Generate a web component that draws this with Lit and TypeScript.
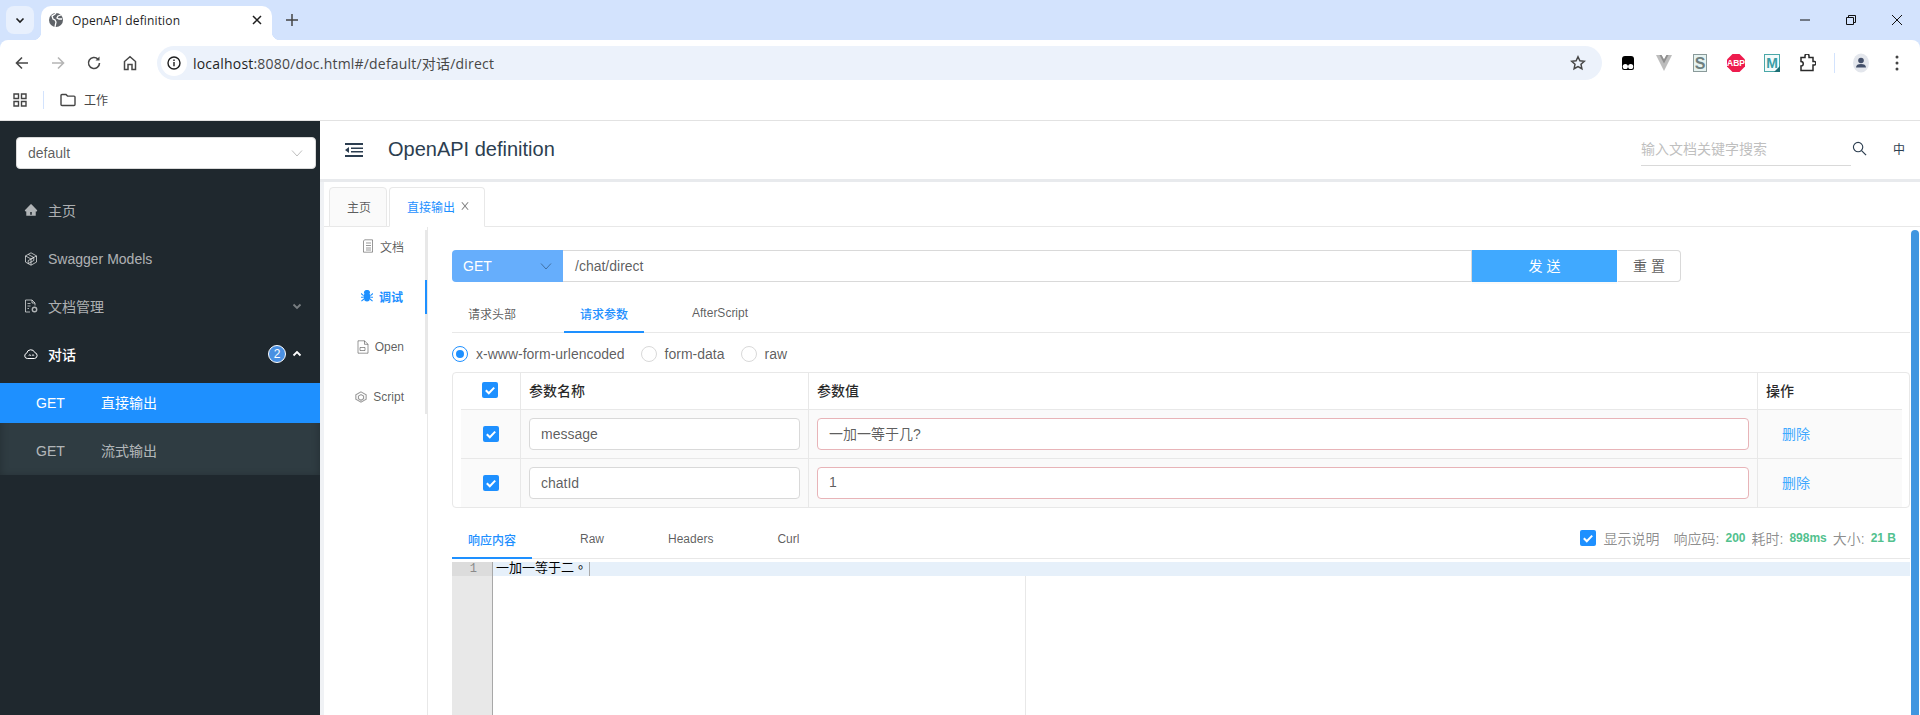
import { LitElement, html, css } from "lit";
import { customElement } from "lit/decorators.js";

const closePath =
  "M563.8 512l262.5-312.9c4.4-5.2.7-13.1-6.1-13.1h-79.8c-4.7 0-9.2 2.1-12.3 5.7L511.6 449.8 295.1 191.7c-3-3.6-7.5-5.7-12.3-5.7H203c-6.8 0-10.5 7.9-6.1 13.1L459.4 512 196.9 824.9A7.95 7.95 0 0 0 203 838h79.8c4.7 0 9.2-2.1 12.3-5.7l216.5-258.1 216.5 258.1c3 3.6 7.5 5.7 12.3 5.7h79.8c6.8 0 10.5-7.9 6.1-13.1L563.8 512z";
const homePath =
  "M946.5 505L560.1 118.8l-25.9-25.9a31.5 31.5 0 0 0-44.4 0L77.5 505a63.9 63.9 0 0 0-18.8 46c.4 35.2 29.7 63.3 64.9 63.3h42.5V940h691.8V614.3h43.4c17.1 0 33.2-6.7 45.3-18.8a63.6 63.6 0 0 0 18.7-45.3c0-17-6.7-33.1-18.8-45.2zM568 868H456V664h112v204z";

const check = html`<span class="cb"><svg viewBox="0 0 16 16" width="16" height="16"><path d="M3.8 8.2l3 3 5.4-5.6" fill="none" stroke="#fff" stroke-width="2"/></svg></span>`;
const chevDown = html`<svg class="ic" viewBox="0 0 12 12" width="12" height="12"><path d="M1 3.5l5 5.5 5-5.5" fill="none" stroke="currentColor" stroke-width="1"/></svg>`;

@customElement("app-root")
export class AppRoot extends LitElement {
  static styles = css`
    :host { display: block; width: 1920px; height: 715px; overflow: hidden; background: #fff;
      font-family: "Liberation Sans", "Noto Sans CJK SC", sans-serif; font-size: 14px; color: rgba(0,0,0,.65); }
    * { box-sizing: border-box; }
    svg { display: block; flex: none; }

    /* browser chrome */
    .browser { background: #d3e3fd; font-family: "Open Sans", "Noto Sans CJK SC", sans-serif; color: #1f1f1f; }
    .strip { height: 40px; display: flex; align-items: flex-start; padding: 6px 0 0 6px; }
    .tabsearch { width: 28px; height: 28px; border-radius: 8px; background: #e8f0fd; display: flex; align-items: center; justify-content: center; }
    .btab { position: relative; margin-left: 7px; width: 231px; height: 34px; background: #fff; border-radius: 10px 10px 0 0; display: flex; align-items: center; padding: 0 9px 6px 7px; font-size: 12px; }
    .btab::before, .btab::after { content: ""; position: absolute; bottom: 0; width: 8px; height: 8px; }
    .btab::before { left: -8px; background: radial-gradient(circle at 0 0, transparent 8px, #fff 8.5px); }
    .btab::after { right: -8px; background: radial-gradient(circle at 100% 0, transparent 8px, #fff 8.5px); }
    .btab .title { margin-left: 8px; flex: 1; letter-spacing: .15px; }
    .newtab { margin: 7px 0 0 13px; }
    .winctl { margin-left: auto; display: flex; padding-top: 9px; padding-right: 18px; gap: 36px; }
    .toolbar { height: 40px; background: #fff; border-radius: 8px 8px 0 0; display: flex; align-items: flex-start; padding: 6px 0 0 13px; }
    .tbtn { width: 18px; height: 34px; margin-right: 18px; display: flex; align-items: center; justify-content: center; color: #474747; }
    .tbtn.dis { color: #b5b5b5; }
    .addr { width: 1445px; height: 34px; border-radius: 17px; background: #ecf2fb; display: flex; align-items: center; padding: 0 16px 0 4px; font-size: 14px; color: #1f1f1f; }
    .info { width: 26px; height: 26px; border-radius: 50%; background: #fff; display: flex; align-items: center; justify-content: center; margin-right: 6px; }
    .url { letter-spacing: .2px; }
    .url span { color: #474747; }
    .star { margin-left: auto; }
    .exts { display: flex; margin-left: 8px; height: 34px; align-items: center; }
    .ext { width: 36px; display: flex; justify-content: center; }
    .sep { width: 1px; height: 20px; background: #d3e3fd; margin: 0 8px 0 8px; }
    .bm { height: 41px; background: #fff; border-bottom: 1px solid #e2e2e2; display: flex; align-items: center; padding: 0 0 1px 13px; font-size: 12px; color: #474747; }
    .bm .bsep { width: 1px; height: 18px; background: #d3e3fd; margin: 0 16px 0 16px; }
    .bm .bname { margin-left: 8px; }

    /* app */
    .app { display: flex; height: 594px; }
    .side { width: 320px; flex: none; background: #1f282e; padding-top: 16px; color: rgba(255,255,255,.65); }
    .sel { margin-left: 16px; width: 300px; height: 32px; background: #fff; border-radius: 4px; border: 1px solid #d9d9d9; display: flex; align-items: center; justify-content: space-between; padding: 0 12px 0 11px; color: rgba(0,0,0,.65); }
    .sel svg { color: #bfbfbf; }
    .menu { margin-top: 18px; }
    .mi { height: 48px; display: flex; align-items: center; padding-left: 24px; }
    .mi.up { padding-bottom: 2px; }
    .mi svg.mic { width: 14px; height: 14px; margin-right: 10px; }
    .mi .arrow { margin-left: auto; margin-right: 17px; color: rgba(255,255,255,.4); }
    .mi.open { color: #fff; font-weight: 500; }
    .badge { margin-left: auto; width: 18px; height: 18px; border-radius: 50%; border: 1px solid #fff; background: #4a90e2; color: #fff; font-size: 12px; font-weight: 400; display: flex; align-items: center; justify-content: center; }
    .mi.open .arrow { margin-left: 5px; color: #fff; }
    .sub { margin-top: 4px; background: #2f3c42; padding-bottom: 4px; box-shadow: inset 0 2px 8px rgba(0,0,0,.25); }
    .si { height: 40px; display: flex; align-items: center; padding-left: 36px; }
    .si .m { width: 65px; }
    .si .n { padding-bottom: 2px; }
    .si.on { background: #1e90ff; color: #fff; margin-bottom: 8px; }

    .main { flex: 1; min-width: 0; background: #f0f2f5; display: flex; flex-direction: column; }
    .head { height: 58px; background: #fff; display: flex; align-items: center; padding-left: 25px; color: #2c3e50; flex: none; }
    .head .title { margin: 0 0 2px 25px; font-size: 20px; }
    .srch { margin-left: auto; width: 210px; height: 32px; padding-bottom: 3px; border-bottom: 1px solid #d9d9d9; color: #bfbfbf; display: flex; align-items: center; }
    .head .sic { margin: -4px 0 0 1px; }
    .zh { margin-left: 26px; margin-right: 15px; margin-top: -4px; font-size: 12px; }
    .band { height: 3px; background: #e8eaed; flex: none; }

    .content { flex: 1; min-height: 0; margin-left: 4px; background: #fff; display: flex; flex-direction: column; }
    .ptabs { flex: none; height: 45px; padding: 5px 0 0 5px; display: flex; gap: 2px; border-bottom: 1px solid #e8e8e8; font-size: 12px; }
    .pt { height: 40px; padding: 0 15px 2px 17px; display: flex; align-items: center; border: 1px solid #e8e8e8; border-radius: 4px 4px 0 0; background: #fafafa; }
    .pt.on { background: #fff; color: #1e90ff; border-bottom-color: #fff; gap: 4px; padding-right: 13px; }
    .pt.on svg { color: rgba(0,0,0,.5); }

    .body { flex: 1; min-height: 0; display: flex; }
    .rail { width: 104px; flex: none; border-right: 1px solid #e8e8e8; font-size: 12px; }
    .railin { margin-top: 3px; width: 103px; height: 184px; border-right: 2px solid #e8e8e8; }
    .ri { width: 103px; height: 34px; margin-bottom: 16px; padding-right: 23px; display: flex; align-items: center; justify-content: flex-end; gap: 6px; }
    .ri.up { padding-bottom: 2px; }
    .ri svg { color: rgba(0,0,0,.4); }
    .ri.on { color: #1e90ff; font-weight: 700; border-right: 2px solid #1e90ff; padding-right: 22px; }
    .ri.on svg { color: #1e90ff; }

    .pane { flex: 1; min-width: 0; display: flex; }
    .scroll { flex: 1; min-width: 0; padding: 23px 0 0 24px; display: flex; flex-direction: column; }
    .bar { width: 8px; margin: 3px 1px 0 1px; background: #4096e0; border-radius: 4px 4px 0 0; flex: none; }

    .urlrow { display: flex; height: 32px; flex: none; }
    .meth { width: 111px; background: #66aefc; color: #fff; border-radius: 4px 0 0 4px; display: flex; align-items: center; justify-content: space-between; padding: 0 11px; }
    .meth svg { color: rgba(0,0,0,.35); }
    .urli { width: 909px; border: 1px solid #d9d9d9; border-left: none; display: flex; align-items: center; padding-left: 12px; }
    .send { width: 145px; background: #40a9ff; color: #fff; display: flex; align-items: center; justify-content: center; padding-bottom: 2px; box-shadow: 0 2px 0 rgba(0,0,0,.02); }
    .rst { width: 64px; border: 1px solid #d9d9d9; border-left-color: #fff; border-radius: 0 4px 4px 0; display: flex; align-items: center; justify-content: center; padding-bottom: 2px; }

    .tabs { flex: none; height: 38px; display: flex; align-items: flex-start; border-bottom: 1px solid #e8e8e8; font-size: 12px; }
    .t1 { margin-top: 13px; }
    .t { height: 38px; padding: 0 16px 2px; margin-right: 32px; display: flex; align-items: center; }
    .t.on { color: #1e90ff; font-weight: 500; border-bottom: 2px solid #1e90ff; padding-bottom: 0; }

    .radios { margin-top: 13px; height: 16px; flex: none; display: flex; gap: 16px; }
    .r { display: flex; align-items: center; gap: 8px; }
    .rd { width: 16px; height: 16px; border-radius: 50%; border: 1px solid #d9d9d9; }
    .rd.on { border-color: #1e90ff; display: flex; align-items: center; justify-content: center; }
    .rd.on::after { content: ""; width: 8px; height: 8px; border-radius: 50%; background: #1e90ff; }

    .tbl { margin-top: 10px; flex: none; height: 136px; border: 1px solid #e8e8e8; border-radius: 4px; }
    .hr { height: 36px; display: grid; grid-template-columns: 68px 288px 949px 1fr; font-weight: 500; color: rgba(0,0,0,.85); }
    .hr > div { display: flex; align-items: center; padding: 0 0 2px 8px; }
    .hr > div:not(:last-child), .br > div:not(:last-child) { border-right: 1px solid #e8e8e8; }
    .hr > div:first-child { justify-content: center; padding-left: 6px; }
    .br { margin: 0 7px 0 8px; height: 49px; background: #fafafa; border-top: 1px solid #e8e8e8; display: grid; grid-template-columns: 60px 288px 949px 1fr; }
    .br > div { display: flex; align-items: center; padding: 0 8px; }
    .br > div:first-child { justify-content: center; padding: 0; }
    .cb { width: 16px; height: 16px; background: #1e90ff; border-radius: 2px; display: block; flex: none; }
    .inp { width: 100%; height: 32px; background: #fff; border: 1px solid #d9d9d9; border-radius: 4px; display: flex; align-items: center; padding-left: 11px; }
    .inp.err { border-color: #e8b4b8; padding-bottom: 2px; }
    .br > div:last-child { padding: 0 0 2px 24px; color: #40a9ff; }

    .t2 { margin-top: 13px; }
    .opts { margin-left: auto; height: 36px; padding: 0 14px 2px 0; display: flex; align-items: center; font-size: 14px; color: rgba(0,0,0,.45); }
    .opts b { color: #52c18e; font-size: 12px; font-weight: 700; margin: 0 6px; }
    .opts .d { margin: 0 14px 0 8px; }
    .opts b:last-child { margin-right: 0; }

    .editor { margin-top: 3px; flex: 1; min-height: 0; display: flex; }
    .gut { width: 41px; flex: none; background: #e8e8e8; border-right: 1px solid #a8a8a8; font-family: "Liberation Mono", monospace; font-size: 12px; color: #8a8a8a; }
    .gl { height: 14px; background: #dcdcdc; line-height: 14px; padding-right: 15px; text-align: right; }
    .ed { flex: 1; min-width: 0; display: flex; flex-direction: column; }
    .al { height: 14px; flex: none; background: #e6f0fa; display: flex; align-items: center; padding-left: 3px; font-family: "Liberation Mono", "Noto Sans CJK TC", monospace; font-size: 13px; line-height: 14px; color: #000; }
    .caret { width: 1px; height: 14px; background: #aaa; margin-left: 2px; }
    .pm { width: 533px; flex: 1; border-right: 1px solid #e8e8e8; }
  `;

  render() {
    return html`
      <div class="browser">
        <div class="strip">
          <div class="tabsearch"><svg viewBox="0 0 12 12" width="12" height="12"><path d="M2.5 4.5L6 8l3.5-3.5" fill="none" stroke="#1f1f1f" stroke-width="1.6"/></svg></div>
          <div class="btab">
            <svg viewBox="0 0 16 16" width="16" height="16"><circle cx="8" cy="8" r="7" fill="#5f6368"/><path d="M8 1c-1 2-3 2-4 3l1 3 2 1 1 2-1 4.800M13 3l-3 1-1 2 2 1 3 0" fill="none" stroke="#fff" stroke-width="1.300"/></svg>
            <span class="title">OpenAPI definition</span>
            <svg viewBox="0 0 12 12" width="12" height="12"><path d="M2 2l8 8M10 2l-8 8" stroke="#1f1f1f" stroke-width="1.500"/></svg>
          </div>
          <svg class="newtab" viewBox="0 0 14 14" width="14" height="14"><path d="M7 1v12M1 7h12" stroke="#444" stroke-width="1.500"/></svg>
          <div class="winctl">
            <svg viewBox="0 0 10 10" width="10" height="10"><path d="M0 5h10" stroke="#111" stroke-width="1"/></svg>
            <svg viewBox="0 0 10 10" width="10" height="10"><path d="M.5 2.500h7v7h-7zM2.500 2.500v-2h7v7h-2" fill="none" stroke="#111" stroke-width="1"/></svg>
            <svg viewBox="0 0 10 10" width="10" height="10"><path d="M0 0l10 10M10 0L0 10" stroke="#111" stroke-width="1"/></svg>
          </div>
        </div>
        <div class="toolbar">
          <div class="tbtn"><svg viewBox="0 0 16 16" width="16" height="16"><path d="M14 8H2.500M8 2.500L2.500 8 8 13.500" fill="none" stroke="currentColor" stroke-width="1.600"/></svg></div>
          <div class="tbtn dis"><svg viewBox="0 0 16 16" width="16" height="16"><path d="M2 8h11.500M8 2.500L13.500 8 8 13.500" fill="none" stroke="currentColor" stroke-width="1.600"/></svg></div>
          <div class="tbtn"><svg viewBox="0 0 16 16" width="16" height="16"><path d="M13.500 8a5.500 5.500 0 1 1-1.600-3.900" fill="none" stroke="currentColor" stroke-width="1.600"/><path d="M13.500 1.500v4h-4z" fill="currentColor"/></svg></div>
          <div class="tbtn"><svg viewBox="0 0 16 16" width="16" height="16"><path d="M2.500 14.500V6.500L8 1.800l5.500 4.700v8H10V9.500H6v5z" fill="none" stroke="currentColor" stroke-width="1.500"/></svg></div>
          <div class="addr">
            <div class="info"><svg viewBox="0 0 14 14" width="14" height="14"><circle cx="7" cy="7" r="6" fill="none" stroke="#1f1f1f" stroke-width="1.400"/><path d="M7 6v4.200M7 3.500v1.500" stroke="#1f1f1f" stroke-width="1.400"/></svg></div>
            <div class="url">localhost<span>:8080/doc.html#/default/对话/direct</span></div>
            <svg class="star" viewBox="0 0 16 16" width="16" height="16"><path d="M8 1.800l1.900 4 4.400.5-3.300 3 .9 4.400L8 11.500l-3.900 2.200.9-4.400-3.300-3 4.400-.5z" fill="none" stroke="#474747" stroke-width="1.500"/></svg>
          </div>
          <div class="exts">
            <div class="ext"><svg viewBox="0 0 16 16" width="16" height="16"><path d="M2 4a3 3 0 0 1 3-3h6a3 3 0 0 1 3 3v9a2 2 0 0 1-2 2H4a2 2 0 0 1-2-2z" fill="#000"/><circle cx="5.300" cy="11.500" r="2.600" fill="#fff"/><circle cx="10.700" cy="11.500" r="2.600" fill="#fff"/></svg></div>
            <div class="ext"><svg viewBox="0 0 18 16" width="18" height="16"><path d="M1 0h5.500L9 4.500 11.500 0H17L9 16z" fill="#bdbdbd"/><path d="M4.500 0h2L9 4.500 11.500 0h2L9 8.500z" fill="#8f8f8f"/></svg></div>
            <div class="ext"><svg viewBox="0 0 16 18" width="16" height="18"><rect x=".5" y=".5" width="13" height="17" transform="translate(1 0)" fill="#e6f3f1" stroke="#8a9a9a"/><text x="8" y="14.500" text-anchor="middle" font-family="Liberation Sans" font-weight="700" font-size="16" fill="#6f8080">S</text></svg></div>
            <div class="ext"><svg viewBox="0 0 18 18" width="18" height="18"><path d="M5.500 0h7L18 5.500v7L12.500 18h-7L0 12.500v-7z" fill="#ee1c4e"/><text x="9" y="12" text-anchor="middle" font-family="Liberation Sans" font-weight="700" font-size="8.500" fill="#fff">ABP</text></svg></div>
            <div class="ext"><svg viewBox="0 0 16 18" width="16" height="18"><rect x=".5" y=".5" width="15" height="17" fill="#f4fbfb" stroke="#4aa8a8"/><text x="8" y="14" text-anchor="middle" font-family="Liberation Sans" font-weight="700" font-size="14" fill="#3a9ea6">M</text><path d="M10 18l6-6v6z" fill="#1d6f75"/></svg></div>
            <div class="ext"><svg viewBox="0 0 16 18" width="16" height="18"><path d="M1 3.500h4V2a2 2 0 0 1 4 0v1.500h4v4h1.500a1.800 1.800 0 0 1 0 3.500H13v5.500H1v-4.500a2.200 2.200 0 0 0 0-4.500z" fill="none" stroke="#2a2a2a" stroke-width="1.500"/></svg></div>
            <div class="sep"></div>
            <div class="ext"><svg viewBox="0 0 16 20" width="16" height="20"><ellipse cx="8" cy="10" rx="8" ry="9.500" fill="#e3e6ec"/><circle cx="8" cy="7.500" r="2.800" fill="#44506a"/><path d="M3 14.500c0-2.500 2-3.500 5-3.500s5 1 5 3.500z" fill="#44506a"/></svg></div>
            <div class="ext"><svg viewBox="0 0 4 16" width="4" height="16"><circle cx="2" cy="2" r="1.500" fill="#444"/><circle cx="2" cy="8" r="1.500" fill="#444"/><circle cx="2" cy="14" r="1.500" fill="#444"/></svg></div>
          </div>
        </div>
        <div class="bm">
          <svg viewBox="0 0 14 14" width="14" height="14"><path d="M1 1h4.500v4.500H1zM8.500 1H13v4.500H8.500zM1 8.500h4.500V13H1zM8.500 8.500H13V13H8.500z" fill="none" stroke="#444" stroke-width="1.400"/></svg>
          <div class="bsep"></div>
          <svg viewBox="0 0 16 14" width="16" height="14"><path d="M1 2.500a1 1 0 0 1 1-1h4l1.500 1.600H14a1 1 0 0 1 1 1v7.400a1 1 0 0 1-1 1H2a1 1 0 0 1-1-1z" fill="none" stroke="#444" stroke-width="1.400"/></svg>
          <span class="bname">工作</span>
        </div>
      </div>

      <div class="app">
        <aside class="side">
          <div class="sel"><span>default</span>${chevDown}</div>
          <div class="menu">
            <div class="mi up"><svg class="mic" viewBox="0 0 1024 1024"><path d="${homePath}" fill="currentColor"/></svg>主页</div>
            <div class="mi"><svg class="mic" viewBox="0 0 14 14"><path d="M7 .8l5.500 3.100v6.200L7 13.200 1.500 10.100V3.900zM1.500 3.900L7 7l5.500-3.100M7 7v6.200M4.200 2.400L9.800 5.500v3l-5.600 3.100v-3L9.800 5.500" fill="none" stroke="currentColor" stroke-width="1"/></svg>Swagger Models</div>
            <div class="mi up"><svg class="mic" viewBox="0 0 14 14"><path d="M6 13H1.500V1h6.500l3 3v2.500M3.500 4.500h3M3.500 7h3M3.500 9.500h1.500M8 1v3h3" fill="none" stroke="currentColor" stroke-width="1"/><circle cx="10.500" cy="10.500" r="2.200" fill="none" stroke="currentColor" stroke-width="1.400"/></svg>文档管理<svg class="arrow" viewBox="0 0 12 12" width="12" height="12"><path d="M2.500 4.500L6 8l3.500-3.500" fill="none" stroke="currentColor" stroke-width="1.800"/></svg></div>
            <div class="mi up open"><svg class="mic" viewBox="0 0 14 14"><path d="M3.500 11.500a2.700 2.700 0 0 1-.6-5.300A4.200 4.200 0 0 1 11 5.600a3 3 0 0 1-.3 5.900z" fill="none" stroke="currentColor" stroke-width="1" transform="translate(-.200 0)"/><path d="M4.800 9l1-1.600 1 1.600M8 9l1-1.600 1 1.600" fill="none" stroke="currentColor" stroke-width=".7"/></svg>对话<span class="badge">2</span><svg class="arrow" viewBox="0 0 12 12" width="12" height="12"><path d="M2.500 7.500L6 4l3.500 3.500" fill="none" stroke="currentColor" stroke-width="1.800"/></svg></div>
          </div>
          <div class="sub">
            <div class="si on"><span class="m">GET</span><span class="n">直接输出</span></div>
            <div class="si"><span class="m">GET</span><span class="n">流式输出</span></div>
          </div>
        </aside>

        <div class="main">
          <header class="head">
            <svg viewBox="0 0 18 16" width="18" height="16"><path d="M0 1h18v2H0zM6 5.500h12v1.500H6zM6 9h12v1.500H6zM0 13h18v2H0zM4 5v6L0 8z" fill="currentColor"/></svg>
            <span class="title">OpenAPI definition</span>
            <div class="srch">输入文档关键字搜索</div>
            <svg class="sic" viewBox="0 0 16 16" width="15" height="15"><circle cx="6.500" cy="6.500" r="5" fill="none" stroke="currentColor" stroke-width="1.200"/><path d="M10.200 10.200L15 15" stroke="currentColor" stroke-width="1.300"/></svg>
            <span class="zh">中</span>
          </header>
          <div class="band"></div>

          <div class="content">
            <div class="ptabs">
              <div class="pt">主页</div>
              <div class="pt on">直接输出<svg viewBox="0 0 1024 1024" width="12" height="12"><path d="${closePath}" fill="currentColor"/></svg></div>
            </div>
            <div class="body">
              <div class="rail"><div class="railin">
                <div class="ri up"><svg viewBox="0 0 12 14" width="12" height="14"><path d="M2.500.8h8v12.400h-9V2zM4 4h5M4 6.500h5M4 9h5M4 11h5" fill="none" stroke="currentColor" stroke-width="1"/></svg>文档</div>
                <div class="ri up on"><svg viewBox="0 0 14 14" width="12" height="12"><ellipse cx="7" cy="8" rx="4" ry="5.500" fill="currentColor"/><path d="M4 3.500a3 3 0 0 1 6 0zM0 4l3 2.500M14 4l-3 2.500M0 8.500h3M14 8.500h-3M.5 13l3-2.500M13.500 13l-3-2.500" fill="currentColor" stroke="currentColor" stroke-width="1.300"/></svg>调试</div>
                <div class="ri"><svg viewBox="0 0 12 14" width="12" height="14"><path d="M1 .8h6.500L11 4.300v8.900H1zM7.500.8v3.500H11M3 7.500h5v3H3z" fill="none" stroke="currentColor" stroke-width="1"/></svg>Open</div>
                <div class="ri"><svg viewBox="0 0 14 14" width="12" height="12"><path d="M7 1l6 3.500v5L7 13 1 9.500v-5zM4 6l3-1.800L10 6v3l-3 1.800L4 9z" fill="none" stroke="currentColor" stroke-width="1.300"/></svg>Script</div>
              </div></div>
              <div class="pane">
                <div class="scroll">
                  <div class="urlrow">
                    <div class="meth"><span>GET</span>${chevDown}</div>
                    <div class="urli">/chat/direct</div>
                    <div class="send">发 送</div>
                    <div class="rst">重 置</div>
                  </div>
                  <div class="tabs t1">
                    <div class="t">请求头部</div>
                    <div class="t on">请求参数</div>
                    <div class="t">AfterScript</div>
                  </div>
                  <div class="radios">
                    <div class="r"><span class="rd on"></span>x-www-form-urlencoded</div>
                    <div class="r"><span class="rd"></span>form-data</div>
                    <div class="r"><span class="rd"></span>raw</div>
                  </div>
                  <div class="tbl">
                    <div class="hr"><div>${check}</div><div>参数名称</div><div>参数值</div><div>操作</div></div>
                    <div class="br"><div>${check}</div><div><div class="inp">message</div></div><div><div class="inp err">一加一等于几?</div></div><div>删除</div></div>
                    <div class="br"><div>${check}</div><div><div class="inp">chatId</div></div><div><div class="inp err">1</div></div><div>删除</div></div>
                  </div>
                  <div class="tabs t2">
                    <div class="t on">响应内容</div>
                    <div class="t">Raw</div>
                    <div class="t">Headers</div>
                    <div class="t">Curl</div>
                    <div class="opts">${check}<span class="d">显示说明</span><span>响应码:</span><b>200</b><span>耗时:</span><b>898ms</b><span>大小:</span><b>21 B</b></div>
                  </div>
                  <div class="editor">
                    <div class="gut"><div class="gl">1</div></div>
                    <div class="ed">
                      <div class="al">一加一等于二。<span class="caret"></span></div>
                      <div class="pm"></div>
                    </div>
                  </div>
                </div>
                <div class="bar"></div>
              </div>
            </div>
          </div>
        </div>
      </div>
    `;
  }
}
